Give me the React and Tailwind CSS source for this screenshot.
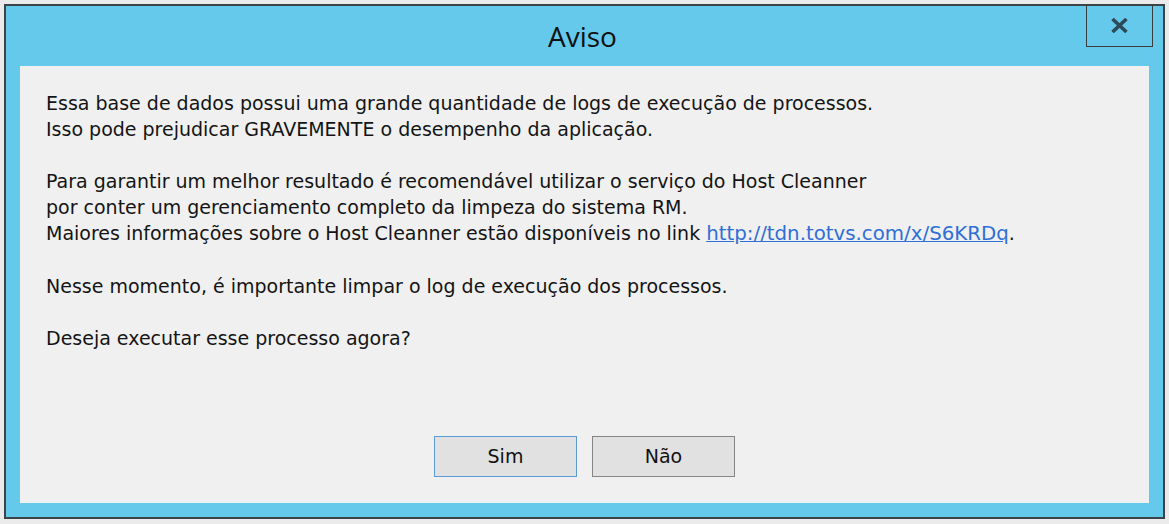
import React from "react";

const lines = [
  "Essa base de dados possui uma grande quantidade de logs de execução de processos.",
  "Isso pode prejudicar GRAVEMENTE o desempenho da aplicação.",
];

export default function App() {
  return (
    <div className="w-[1169px] h-[524px] bg-[#ebebeb] p-[4px] pr-[4px]">
      {/* Window */}
      <div className="w-[1161px] h-[515px] border-2 border-[#3b4448] bg-[#64c9ea] flex flex-col">
        {/* Title bar */}
        <div className="relative h-[60px] flex items-center justify-center">
          <span
            className="text-[28px] text-[#111] -ml-[4px]"
            style={{ fontFamily: '"Open Sans", "Noto Sans", sans-serif' }}
          >
            Aviso
          </span>
          <button className="absolute right-[10px] -top-[1px] w-[67px] h-[42px] border border-[#3c3c3c] border-t-0 flex items-center justify-center">
            <svg width="19" height="15" viewBox="0 0 19 15">
              <path d="M2.5 1 L16.5 14 M16.5 1 L2.5 14" stroke="#2e4a57" strokeWidth="3.6" strokeLinecap="butt" />
            </svg>
          </button>
        </div>

        {/* Content */}
        <div
          className="mx-[14px] mb-[14px] flex-1 bg-[#f0f0f0] flex flex-col pl-[26px] pt-[24px] text-[#141414]"
          style={{ fontFamily: '"DejaVu Sans", "Noto Sans", sans-serif' }}
        >
          <div className="text-[19px] leading-[26px]">
            {lines.map((l) => (
              <div key={l}>{l}</div>
            ))}
            <div>&nbsp;</div>
            <div>Para garantir um melhor resultado é recomendável utilizar o serviço do Host Cleanner</div>
            <div>por conter um gerenciamento completo da limpeza do sistema RM.</div>
            <div>
              Maiores informações sobre o Host Cleanner estão disponíveis no link{" "}
              <a href="#" className="text-[#2f6fd6] underline text-[19.8px]">
                http://tdn.totvs.com/x/S6KRDq
              </a>
              .
            </div>
            <div>&nbsp;</div>
            <div>Nesse momento, é importante limpar o log de execução dos processos.</div>
            <div>&nbsp;</div>
            <div>Deseja executar esse processo agora?</div>
          </div>

          <div className="mt-auto mb-[26px] flex justify-center gap-[15px] -ml-[26px]">
            <button className="w-[143px] h-[41px] bg-[#e1e1e1] border border-[#5b9bd5] text-[19px] text-[#111]">
              Sim
            </button>
            <button className="w-[143px] h-[41px] bg-[#e1e1e1] border border-[#858585] text-[19px] text-[#111]">
              Não
            </button>
          </div>
        </div>
      </div>
    </div>
  );
}
